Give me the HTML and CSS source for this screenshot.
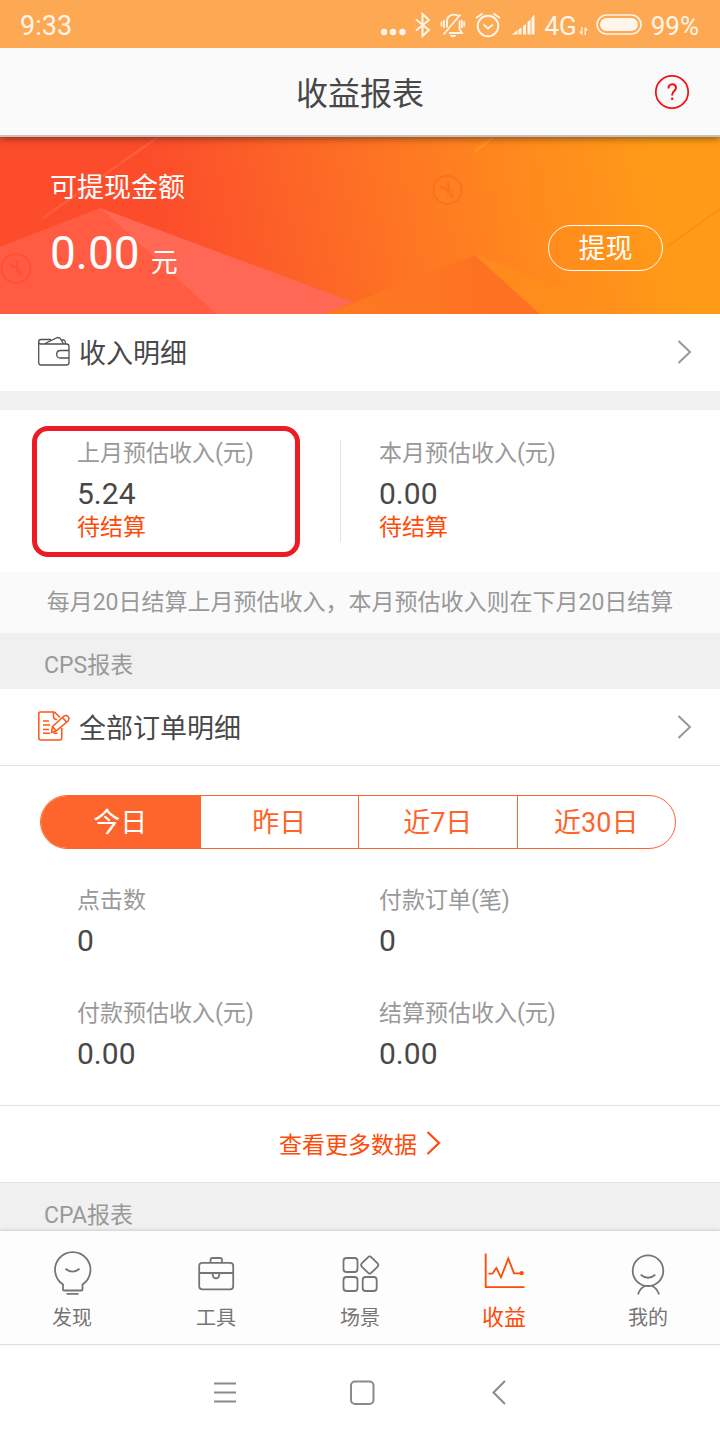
FILE: index.html
```html
<!DOCTYPE html>
<html lang="zh-CN">
<head>
<meta charset="utf-8">
<meta name="viewport" content="width=device-width, initial-scale=1">
<title>收益报表</title>
<link rel="stylesheet" href="styles.css">
</head>
<body>
<div class="status">
  <span class="time">9:33</span>
  <div class="indicators">
    <svg width="26" height="30" viewBox="0 0 26 30" fill="currentColor"><circle cx="4" cy="22" r="3.2"/><circle cx="13" cy="22" r="3.2"/><circle cx="22.500" cy="22" r="3.2"/></svg>
    <svg width="18" height="30" viewBox="0 0 18 30" fill="none" stroke="currentColor" stroke-width="2"><path d="M2 9.500 15 20 8.500 26V4l6.500 6L2 20.500"/></svg>
    <svg width="26" height="30" viewBox="0 0 26 30" fill="none" stroke="currentColor" stroke-width="1.800"><path d="M3.500 24.500 20.500 4.500M7 17.500V11.500C7 4 17 3 18.500 7M9 23h13l-2.500-4v-8.500"/><path d="M10 25.500h6l-3 1.500z" fill="currentColor" stroke-width="1"/><path d="M1.500 11.500v5M4 10v8M21.800 10v8M24.200 11.500v5"/></svg>
    <svg width="30" height="30" viewBox="0 0 30 30" fill="none" stroke="currentColor" stroke-width="2"><circle cx="14" cy="16" r="10.300"/><path d="m9.500 14.500 4.500 4 5-4M2 8 8.500 3.500M19.500 3.500 26 8"/></svg>
    <svg width="24" height="30" viewBox="0 0 24 30" fill="currentColor"><path d="M0 24.500 5.500 20v4.500zM6.500 19.500l3-2v7h-3zM11 16l3-2v10.500h-3zM15.500 12l3-2.500v15h-3zM19.500 7.500l3-3v20h-3z"/></svg>
    <span class="network">4G<svg class="arrows" width="9" height="30" viewBox="0 0 9 30" fill="none" stroke="currentColor" stroke-width="1.300"><path d="M2.800 17v7.500M.8 21.500l2 2.500M6.200 25v-7.500M8.200 20.500l-2-2.500"/></svg></span>
    <svg width="46" height="30" viewBox="0 0 46 30"><rect x="1" y="5" width="44" height="19" rx="9.500" fill="none" stroke="currentColor" stroke-width="1.700"/><rect x="4" y="8" width="38" height="13" rx="6.500" fill="currentColor"/></svg>
    <span class="charge">99%</span>
  </div>
</div>

<header class="header">
  <h1 class="title">收益报表</h1>
  <button class="help" aria-label="帮助"><svg width="36" height="36" viewBox="0 0 36 36" fill="none" stroke="currentColor"><circle cx="18" cy="18" r="16.200" stroke-width="1.700"/><path d="M14.500 14.500c0-5.500 7.500-5.500 7.500-.7 0 3.200-3.800 3.400-3.800 7v.7M18.200 23.500v2.500" stroke-width="2"/></svg></button>
</header>

<main class="content">
  <section class="banner">
    <svg class="banner-art" viewBox="0 0 720 177" preserveAspectRatio="none" aria-hidden="true">
      <defs>
        <linearGradient id="warm" gradientUnits="userSpaceOnUse" x1="130" y1="90" x2="650" y2="-20">
          <stop offset="0" stop-color="#fc4c2b"/><stop offset=".08" stop-color="#fc4e2b"/><stop offset=".25" stop-color="#fc5e28"/><stop offset=".5" stop-color="#fe7523"/><stop offset=".75" stop-color="#ff8a1d"/><stop offset="1" stop-color="#ff9b17"/>
        </linearGradient>
        <linearGradient id="dark" x1="0" y1="0" x2="1" y2="0"><stop offset="0" stop-color="#fe7921"/><stop offset="1" stop-color="#fd7022"/></linearGradient>
        <linearGradient id="light" x1="0" y1="0" x2="1" y2="0"><stop offset="0" stop-color="#ff891d"/><stop offset="1" stop-color="#ff921a"/></linearGradient>
      </defs>
      <path fill="url(#warm)" d="M0 0h720v177H0z"/>
      <path d="M43 81 158 0" stroke="#ff6242" stroke-width="2.500" opacity=".8"/>
      <path d="m475 14 19-14" stroke="#ff951d" stroke-width="2.500"/>
      <path d="m667 110 53-38" stroke="#ff8b1c" stroke-width="2"/>
      <path fill="#ff5c43" d="M0 110 100 71l116 106H0z"/>
      <path fill="#ff6854" d="m100 71 253 94-28 12H216z"/>
      <path fill="url(#dark)" d="m325 177 150-59 65 59z"/>
      <path fill="url(#light)" d="m475 118 155 59h-90z"/>
      <g fill="none" stroke="#fd5233" stroke-width="2"><circle cx="16" cy="131.500" r="14.500"/><path d="m9 127 8.500 5-.5-9M17.500 132l4 7" stroke-width="2.500"/><path d="m14.500 136 8-4.500M16.500 139l7-4" stroke-width="1"/></g>
      <g fill="none" stroke="#fd7022" stroke-width="2"><circle cx="447.500" cy="53" r="14" fill="#ff801f"/><path d="m440 49 9 5-.5-9M449 54l4 7" stroke-width="2.500"/><path d="m445 58 8-4.500M447 61l7-4" stroke-width="1"/></g>
    </svg>
    <div class="banner-body">
      <div class="banner-label">可提现金额</div>
      <div class="banner-row">
        <div class="amount">0.00 <span class="unit">元</span></div>
        <button class="withdraw">提现</button>
      </div>
    </div>
  </section>

  <a class="link-row" href="#income">
    <svg class="row-icon" width="32" height="32" viewBox="0 0 32 32" fill="none" stroke="#505050" stroke-width="1.300"><path d="M31 14.500V10.500Q31 8 28.500 8H3Q.7 8 .7 5.500V26.500Q.7 29 3 29H28.500Q31 29 31 26.500V22M31 14.500H22.500Q18.700 14.500 18.700 18.300T22.500 22H31V14.500M.7 6Q.7 3.500 3 3.500H13M7 7.500 19.500 1.500 22 2 25.500 8M23.500 4H26Q27.500 4.500 27.500 8"/></svg>
    <span class="row-text">收入明细</span>
    <svg width="14" height="24" viewBox="0 0 14 24" fill="none" stroke="#999" stroke-width="2"><path d="m.5 1 11.500 11L.5 23"/></svg>
  </a>

  <section class="estimate">
    <div class="stat marked">
      <div class="label">上月预估收入(元)</div>
      <div class="value">5.24</div>
      <div class="pending">待结算</div>
    </div>
    <div class="stat divided">
      <div class="label">本月预估收入(元)</div>
      <div class="value">0.00</div>
      <div class="pending">待结算</div>
    </div>
  </section>
  <p class="note">每月20日结算上月预估收入，本月预估收入则在下月20日结算</p>

  <h2 class="group">CPS报表</h2>
  <a class="link-row lined" href="#orders">
    <svg class="row-icon" width="32" height="32" viewBox="0 0 32 32" fill="none" stroke="#ff5510" stroke-width="1.500"><path d="M16.500 1H2.500Q.8 1 .8 3V27Q.8 29 3 29H21.500Q23.800 29 23.800 26.500V17M15.500 1V5.500Q15.500 8.500 19 8.500M16.500 1l5.500 5.500M5 10h6M5 14h7M5 18.500h6M5 22.300h7M15.500 22.300h4"/><path d="m14.500 15.500 11-10Q28 3.500 30 5.500t0 4.500L18 20l-4.500 1.500zM14.500 15.500l3.500 4.500M24.500 6.500l4 4.500"/></svg>
    <span class="row-text">全部订单明细</span>
    <svg width="14" height="24" viewBox="0 0 14 24" fill="none" stroke="#999" stroke-width="2"><path d="m.5 1 11.500 11L.5 23"/></svg>
  </a>

  <div class="periods">
    <button class="period active">今日</button>
    <button class="period">昨日</button>
    <button class="period">近7日</button>
    <button class="period">近30日</button>
  </div>
  <section class="metrics">
    <div class="stat"><div class="label">点击数</div><div class="value">0</div></div>
    <div class="stat"><div class="label">付款订单(笔)</div><div class="value">0</div></div>
    <div class="stat"><div class="label">付款预估收入(元)</div><div class="value">0.00</div></div>
    <div class="stat"><div class="label">结算预估收入(元)</div><div class="value">0.00</div></div>
  </section>
  <a class="more" href="#more">查看更多数据
    <svg width="14" height="24" viewBox="0 0 14 24" fill="none" stroke="currentColor" stroke-width="2.200"><path d="m.5 1 11.500 11L.5 23"/></svg>
  </a>
  <h2 class="group">CPA报表</h2>
</main>

<nav class="tabs">
  <a class="tab" href="#discover"><svg width="48" height="48" viewBox="0 0 48 48"><path d="M15 34.500A17.700 17.700 0 1 1 34.500 34.500V39.500Q34.500 40.500 33.500 40.500H16Q15 40.500 15 39.500zM17.500 18.800Q24.500 24.500 31.500 18.800M18.500 43.800h12"/></svg>发现</a>
  <a class="tab" href="#tools"><svg width="48" height="48" viewBox="0 0 48 48"><rect x="7.200" y="12.800" width="34" height="26.500" rx="3"/><path d="M7.200 23h34M18.500 12.800V10q0-2 2-2h7.500q2 0 2 2v2.800M20.700 23v2a3.300 3.300 0 0 0 6.600 0v-2"/></svg>工具</a>
  <a class="tab" href="#scenes"><svg width="48" height="48" viewBox="0 0 48 48"><rect x="7.500" y="8" width="14" height="14" rx="3"/><rect x="7.500" y="27" width="14" height="14" rx="3"/><rect x="26.700" y="27" width="14" height="14" rx="3"/><rect x="27" y="8.300" width="13.400" height="13.400" rx="2.500" transform="rotate(45 33.700 15)"/></svg>场景</a>
  <a class="tab current" href="#earnings"><svg width="48" height="48" viewBox="0 0 48 48"><path d="M5.700 3.500V37.200H44.500M8.500 23.700h4l3.800-5.700 4.700 9.300L28.300 8.500 34 23.300h7.500"/><circle cx="41.700" cy="23.200" r="1.200"/></svg>收益</a>
  <a class="tab" href="#mine"><svg width="48" height="48" viewBox="0 0 48 48"><circle cx="24" cy="20.700" r="15.300"/><path d="M16.700 24.800q7.300 6 14.600 0M14 44.500q2-6.500 7-8.500M35 44.500q-2-6.500-7-8.500"/></svg>我的</a>
</nav>

<div class="system">
  <button class="key" aria-label="菜单"><svg width="26" height="26" viewBox="0 0 26 26"><path d="M2 3.500h22M2 12.500h22M2 21.500h22"/></svg></button>
  <button class="key" aria-label="主页"><svg width="26" height="26" viewBox="0 0 26 26"><rect x="2" y="1.500" width="22.500" height="22.500" rx="4"/></svg></button>
  <button class="key" aria-label="返回"><svg width="26" height="26" viewBox="0 0 26 26"><path d="M19 1 7.500 12.500 19 24"/></svg></button>
</div>
</body>
</html>
```

FILE: styles.css
```css
* {
  box-sizing: border-box;
}

body {
  margin: 0;
  height: 100vh;
  display: flex;
  flex-direction: column;
  background: #fff;
  color: #484848;
  font-family: Roboto, "Noto Sans CJK SC", sans-serif;
  font-size: 27px;
}

a {
  color: inherit;
  text-decoration: none;
}

button {
  margin: 0;
  padding: 0;
  border: 0;
  background: none;
  color: inherit;
  font: inherit;
}

svg {
  display: block;
  flex: none;
}

h1, h2, p {
  margin: 0;
  font-weight: 400;
}

.status {
  flex: none;
  position: relative;
  z-index: 2;
  display: flex;
  justify-content: space-between;
  align-items: center;
  height: 48px;
  padding: 3px 21px 0 20px;
  background: #fda853;
  color: #fff5ea;
}

.indicators {
  display: flex;
  align-items: center;
  gap: 8px;
  height: 45px;
  font-size: 26px;
}

.indicators svg {
  margin-bottom: 2px;
}

.network {
  display: flex;
  align-items: center;
}

.arrows {
  margin-left: 2px;
}

.charge {
  margin-left: 1px;
}

.header {
  flex: none;
  position: relative;
  z-index: 1;
  display: grid;
  grid-template-columns: 1fr auto 1fr;
  align-items: center;
  height: 89px;
  padding: 0 30px;
  background: #fafafa;
  border-bottom: 2px solid #c2c2c2;
  box-shadow: 0 1px 8px rgba(0, 0, 0, 0.5);
}

.title {
  grid-column: 2;
  padding-top: 4px;
  font-size: 32px;
  line-height: 40px;
}

.help {
  justify-self: end;
  color: #f50d12;
}

.content {
  flex: 1;
  min-height: 0;
  overflow: hidden;
}

.banner {
  position: relative;
  color: #fff;
}

.banner-art {
  position: absolute;
  width: 100%;
  height: 100%;
}

.banner-body {
  position: relative;
  padding: 35px 57px 31px 50px;
}

.banner-label {
  line-height: 32px;
}

.banner-row {
  display: flex;
  justify-content: space-between;
  align-items: flex-start;
  margin-top: 21px;
}

.amount {
  display: flex;
  align-items: flex-end;
  gap: 11px;
  height: 58px;
  font-size: 46px;
  line-height: 60px;
}

.unit {
  font-size: 27px;
  line-height: 40px;
}

.withdraw {
  width: 115px;
  height: 46px;
  padding-bottom: 3px;
  border: 1px solid #fff;
  border-radius: 23px;
}

.link-row {
  display: flex;
  align-items: center;
  height: 77px;
  padding: 0 28px 2px 38px;
}

.row-icon {
  margin-right: 9px;
}

.row-text {
  flex: 1;
}

.lined {
  padding-bottom: 0;
  border-bottom: 1px solid #e3e3e3;
}

.lined .row-text {
  padding-bottom: 2px;
}

.estimate,
.metrics {
  display: grid;
  grid-template-columns: 1fr 1fr;
  padding: 30px 78px 30px 38px;
}

.estimate {
  border-top: 19px solid #f0f0f0;
}

.metrics {
  row-gap: 40px;
  padding-top: 38px;
  padding-bottom: 32px;
  border-bottom: 1px solid #e3e3e3;
}

.stat {
  position: relative;
  padding-left: 39px;
}

.divided {
  padding-left: 38px;
  border-left: 1px solid #e3e3e3;
}

.marked::after {
  content: "";
  position: absolute;
  inset: -14px 40px -15px -6px;
  border: 5px solid #ed1c24;
  border-radius: 16px;
}

.label {
  color: #999;
  font-size: 23px;
  line-height: 28px;
}

.value {
  margin-top: 7px;
  font-size: 30px;
  line-height: 38px;
}

.pending {
  color: #ff4a08;
  font-size: 23px;
  line-height: 29px;
}

.note {
  padding: 16px 0 15px;
  background: #fafafa;
  color: #999;
  font-size: 23px;
  line-height: 30px;
  text-align: center;
  white-space: nowrap;
}

.group {
  height: 56px;
  padding: 5px 44px 0;
  background: #f0f0f0;
  color: #999;
  font-size: 23px;
  line-height: 56px;
}

.periods {
  display: grid;
  grid-template-columns: repeat(4, 1fr);
  height: 54px;
  margin: 29px 44px 0 40px;
  overflow: hidden;
  border: 1px solid #fd652c;
  border-radius: 27px;
  color: #fd652c;
}

.period {
  padding-bottom: 4px;
}

.period + .period {
  border-left: 1px solid #fd652c;
}

.active {
  background: #fd652c;
  color: #fff;
}

.more {
  display: flex;
  justify-content: center;
  align-items: center;
  gap: 10px;
  height: 77px;
  padding-bottom: 2px;
  border-bottom: 1px solid #e3e3e3;
  color: #ff4a08;
  font-size: 23px;
}

.tabs {
  flex: none;
  position: relative;
  display: grid;
  grid-template-columns: repeat(5, 1fr);
  height: 114px;
  padding-top: 19px;
  background: #fdfdfd;
  border-bottom: 1px solid #e0e0e0;
  box-shadow: 0 -1px 3px rgba(0, 0, 0, 0.15);
  color: #757575;
  font-size: 20px;
  line-height: 26px;
}

.tab {
  display: flex;
  flex-direction: column;
  align-items: center;
  gap: 7px;
}

.tab svg {
  fill: none;
  stroke: currentColor;
  stroke-width: 1.8px;
}

.current {
  color: #ff4a08;
  font-size: 22px;
}

.system {
  flex: none;
  display: flex;
  justify-content: center;
  align-items: center;
  gap: 97px;
  height: 95px;
  padding-left: 3px;
  color: #8a8a8a;
}

.key {
  width: 40px;
}

.key svg {
  margin: 0 auto;
  fill: none;
  stroke: currentColor;
  stroke-width: 2px;
}
```
